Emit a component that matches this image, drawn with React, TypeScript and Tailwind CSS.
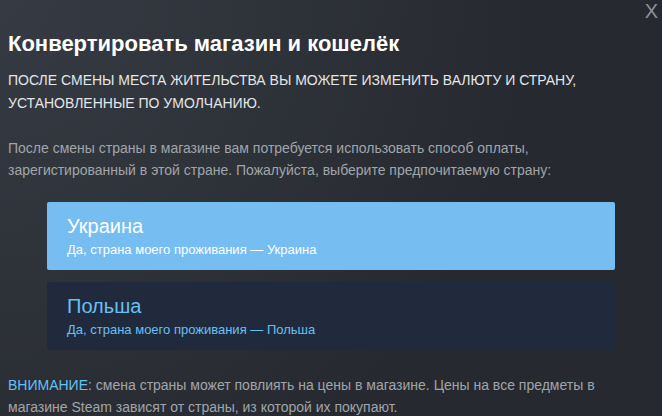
import React from "react";

const countries = [
  { name: "Украина", active: true },
  { name: "Польша", active: false },
];

export default function App() {
  return (
    <div
      className="relative h-[416px] w-[662px] overflow-hidden bg-[#26292f] text-[#dcdedf]"
      style={{ fontFamily: '"Liberation Sans", Arial, sans-serif' }}
    >
      <div className="pointer-events-none absolute inset-0 bg-[radial-gradient(circle_at_top_left,rgba(74,81,92,0.45)_0%,rgba(75,81,92,0)_70%)]" />
      <button className="absolute right-[4px] top-[1px] text-[20px] leading-none text-[#8d9199]">X</button>

      <div className="relative flex flex-col px-2 pt-[30px]">
        <h1 className="text-[22px] font-bold leading-[28px] text-white">Конвертировать магазин и кошелёк</h1>

        <p className="mt-[11px] text-[14px] uppercase leading-[23px] text-[#e4e6e8]">
          После смены места жительства вы можете изменить валюту и страну, установленные по умолчанию.
        </p>

        <p className="mt-[22px] text-[14px] leading-[22px] text-[#a1a5ab]">
          После смены страны в магазине вам потребуется использовать способ оплаты, зарегистированный в этой стране.
          Пожалуйста, выберите предпочитаемую страну:
        </p>

        <div className="mt-[21px] flex flex-col gap-[12px] px-[39px]">
          {countries.map((c) => (
            <div
              key={c.name}
              className={
                c.active
                  ? "flex h-[68px] flex-col rounded-[2px] bg-[#76bdf2] px-[20px] pt-[12px] text-white"
                  : "flex h-[68px] flex-col rounded-[2px] bg-[#212a3c] px-[20px] pt-[12px] text-[#66c0f4]"
              }
            >
              <div className="text-[20px] leading-[24px]">{c.name}</div>
              <div className="mt-[3px] text-[13px] leading-[18px]">Да, страна моего проживания — {c.name}</div>
            </div>
          ))}
        </div>

        <p className="mt-[24px] text-[14px] leading-[22px] text-[#a1a5ab]">
          <span className="text-[#66c0f4]">ВНИМАНИЕ:</span> смена страны может повлиять на цены в магазине. Цены на все
          предметы в магазине Steam зависят от страны, из которой их покупают.
        </p>
      </div>
    </div>
  );
}
